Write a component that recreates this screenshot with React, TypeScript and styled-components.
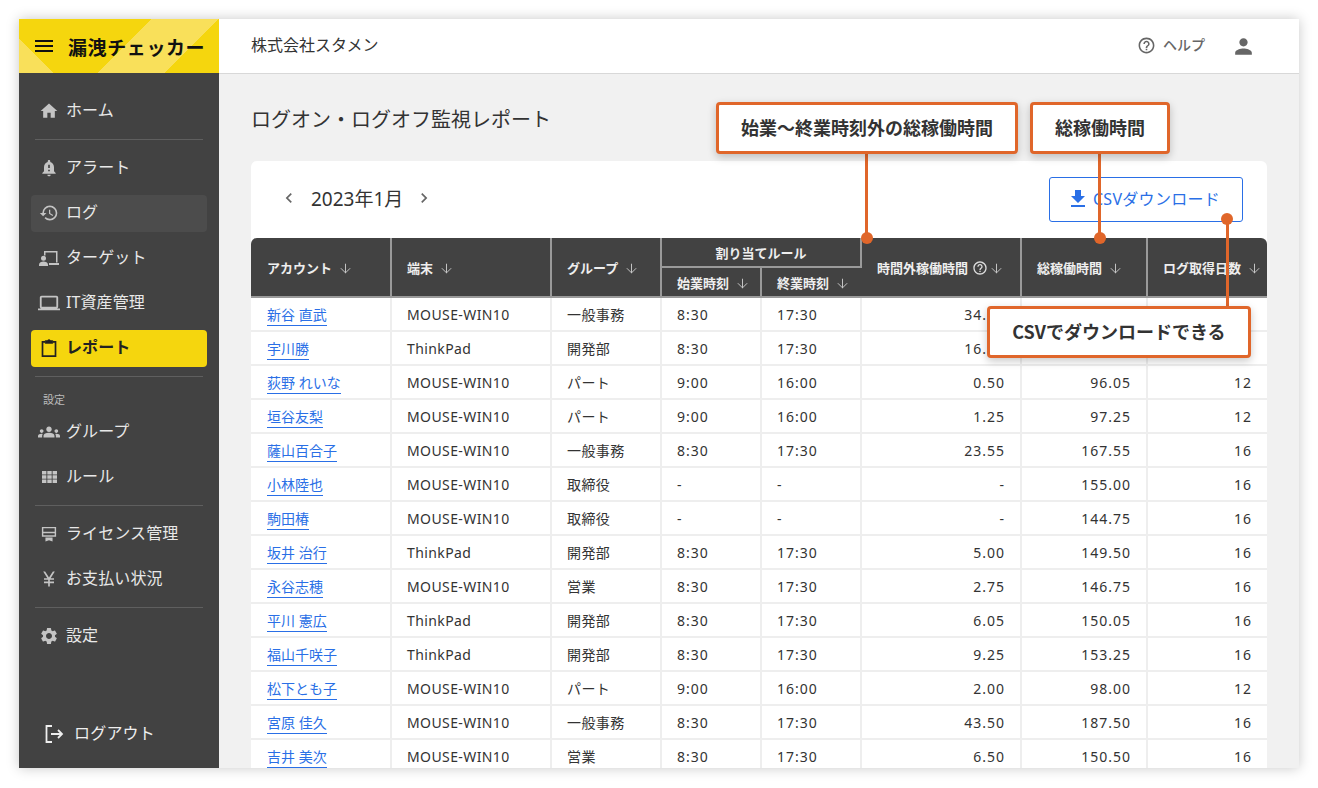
import React from 'react';
import styled, { createGlobalStyle } from 'styled-components';
import { ArrowDown } from 'lucide-react';
import {
  MdHome,
  MdNotificationImportant,
  MdHistory,
  MdOutlineLaptop,
  MdGroups,
  MdCurrencyYen,
  MdSettings,
  MdHelpOutline,
  MdPerson,
  MdChevronLeft,
  MdChevronRight,
  MdFileDownload,
  MdMenu,
} from 'react-icons/md';

const GlobalStyle = createGlobalStyle`
  html, body {
    margin: 0;
    padding: 0;
    background: #fff;
    height: 788px;
    overflow: hidden;
  }
  body {
    font-family: "Noto Sans", "Noto Sans CJK JP", sans-serif;
    color: #333;
  }
  * { box-sizing: border-box; }
`;

const Page = styled.div`
  padding: 19px 19px 20px;
  height: 788px;
`;

const Window = styled.div`
  position: relative;
  width: 1280px;
  height: 749px;
  display: flex;
  overflow: hidden;
  background: #f1f1f1;
  box-shadow: 0 0 12px rgba(0, 0, 0, 0.22);
`;

const Sidebar = styled.aside`
  width: 200px;
  flex: none;
  display: flex;
  flex-direction: column;
  background: #424242;
  color: #eee;
`;

const Logo = styled.div`
  height: 54px;
  flex: none;
  display: flex;
  align-items: center;
  padding-left: 13px;
  color: #111;
  background:
    linear-gradient(45deg, #f9e05a 24.7px, transparent 24.7px),
    linear-gradient(135deg, #f5d60e 94px, #f9e05a 94px, #f9e05a 141.4px, #f5d60e 141.4px);
`;

const LogoText = styled.span`
  margin-left: 12px;
  font-size: 19px;
  font-weight: 700;
  letter-spacing: 0.6px;
  font-family: "Noto Sans CJK JP", sans-serif;
`;

const Nav = styled.nav`
  flex: 1;
  display: flex;
  flex-direction: column;
  padding: 20px 12px 24px;
`;

const NavItem = styled.a<{ $active?: boolean; $current?: boolean }>`
  height: 37px;
  flex: none;
  display: flex;
  align-items: center;
  padding: 0 0 5px 7px;
  border-radius: 4px;
  margin-bottom: 8px;
  font-size: 16px;
  letter-spacing: 0.1px;
  color: ${(p) => (p.$active ? '#222' : '#e8e8e8')};
  font-weight: ${(p) => (p.$active ? 700 : 400)};
  background: ${(p) => (p.$active ? '#f5d60e' : p.$current ? '#4c4c4c' : 'transparent')};
`;

const NavIcon = styled.span<{ $active?: boolean }>`
  width: 22px;
  height: 20px;
  margin: 4px 6px 0 0;
  display: flex;
  align-items: center;
  justify-content: center;
  font-size: 20px;
  color: ${(p) => (p.$active ? '#222' : '#c4c4c4')};
`;

const Divider = styled.div`
  height: 1px;
  flex: none;
  margin: 1px 4px 10px;
  background: #5f5f5f;
`;

const NavLabel = styled.div`
  font-size: 11px;
  color: #bbb;
  line-height: 16px;
  margin: 5px 0 6px 12px;
`;

const Logout = styled.a`
  margin-top: auto;
  display: flex;
  align-items: center;
  padding-left: 13px;
  height: 24px;
  font-size: 16px;
  color: #eee;
  letter-spacing: 0.2px;
`;

const LogoutIcon = styled.svg`
  width: 20px;
  height: 20px;
  margin: 3px 10px 0 0;
`;

const Content = styled.div`
  flex: 1;
  min-width: 0;
  display: flex;
  flex-direction: column;
`;

const TopBar = styled.header`
  height: 55px;
  flex: none;
  display: flex;
  align-items: center;
  padding: 0 43px 4px 32px;
  background: #fff;
  border-bottom: 1px solid #d8d8d8;
  font-size: 16px;
  color: #333;
`;

const HelpLink = styled.a`
  margin-left: auto;
  display: flex;
  align-items: center;
  font-size: 14px;
  font-weight: 500;
  color: #666;
`;

const HelpIcon = styled(MdHelpOutline)`
  font-size: 19px;
  margin: 3px 7px 0 0;
`;

const UserIcon = styled(MdPerson)`
  font-size: 25px;
  margin-left: 26px;
  margin-top: 4px;
  color: #666;
`;

const Main = styled.main`
  flex: 1;
  min-height: 0;
  overflow: hidden;
  padding: 30px 32px 0;
`;

const Title = styled.h1`
  margin: 0 0 25px;
  font-size: 20px;
  line-height: 32px;
  font-weight: 400;
  color: #333;
`;

const Card = styled.section`
  background: #fff;
  border-radius: 6px 6px 0 0;
`;

const Toolbar = styled.div`
  height: 77px;
  display: flex;
  align-items: center;
  padding: 0 24px 0 28px;
`;

const MonthNav = styled.div`
  display: flex;
  align-items: center;
  font-size: 19px;
  color: #333;
  margin-top: -4px;
`;

const Chevron = styled.span`
  display: flex;
  font-size: 20px;
  color: #666;
`;

const MonthLabel = styled.span`
  margin: 0 11px 0 12px;
`;

const DownloadButton = styled.button`
  margin-left: auto;
  margin-top: -1px;
  width: 194px;
  height: 45px;
  display: flex;
  align-items: center;
  justify-content: center;
  padding: 0 6px 2px 0;
  background: #fff;
  border: 1px solid #2a6fe6;
  border-radius: 3px;
  font-family: inherit;
  font-size: 16px;
  letter-spacing: 0.3px;
  color: #2a6fe6;
`;

const DownloadIcon = styled(MdFileDownload)`
  font-size: 24px;
  margin: 2px 3px 0 0;
`;

const Table = styled.table`
  width: 1016px;
  table-layout: fixed;
  border-collapse: separate;
  border-spacing: 0;
  font-size: 14px;
`;

const Th = styled.th`
  height: 30px;
  padding: 0 0 0 15px;
  background: #424242;
  color: #eee;
  font-size: 13px;
  font-weight: 700;
  text-align: left;
  white-space: nowrap;
  border-right: 2px solid #9a9a9a;
  border-bottom: 2px solid #9a9a9a;
  &:last-child { border-right: none; }
`;

const GroupTh = styled(Th)`
  text-align: center;
  padding: 0;
`;

const FirstTh = styled(Th)`
  padding-left: 16px;
  border-top-left-radius: 6px;
`;

const LastTh = styled(Th)`
  border-top-right-radius: 6px;
  border-right: none;
`;

const SortIcon = styled(ArrowDown).attrs({ size: 15, strokeWidth: 1.5 })`
  margin-left: 6px;
  vertical-align: -3px;
  color: #ccc;
`;

const TightSortIcon = styled(SortIcon)`
  margin-left: 1px;
`;

const InfoIcon = styled(MdHelpOutline)`
  font-size: 16px;
  margin-left: 4px;
  vertical-align: -3px;
  color: #ddd;
`;

const Td = styled.td<{ $num?: boolean; $digits?: boolean }>`
  height: 34px;
  padding: ${(p) => (p.$num ? '0 15px 0 0' : '0 0 0 15px')};
  text-align: ${(p) => (p.$num ? 'right' : 'left')};
  color: #333;
  letter-spacing: ${(p) => (p.$digits ? '1px' : '0.4px')};
  white-space: nowrap;
  border-right: 2px solid #eee;
  border-bottom: 2px solid #eee;
  &:last-child { border-right: none; }
  &:first-child { padding-left: 16px; }
`;

const AccountLink = styled.a`
  color: #2a6fe6;
  padding-bottom: 1px;
  border-bottom: 1px solid #2a6fe6;
  letter-spacing: 0;
`;

const Callout = styled.div<{ $left: number; $top: number; $width: number }>`
  position: absolute;
  left: ${(p) => p.$left}px;
  top: ${(p) => p.$top}px;
  width: ${(p) => p.$width}px;
  height: 52px;
  display: flex;
  align-items: center;
  justify-content: center;
  padding-bottom: 2px;
  background: #fff;
  border: 3px solid #e0662a;
  border-radius: 4px;
  box-shadow: 0 3px 8px rgba(0, 0, 0, 0.22);
  font-family: "Noto Sans CJK JP", sans-serif;
  font-size: 18px;
  font-weight: 700;
  color: #333;
  z-index: 3;
`;

const Leader = styled.div<{ $left: number; $top: number; $height: number }>`
  position: absolute;
  left: ${(p) => p.$left}px;
  top: ${(p) => p.$top}px;
  width: 3px;
  height: ${(p) => p.$height}px;
  background: #e0662a;
  z-index: 2;
`;

const Dot = styled.div<{ $left: number; $top: number }>`
  position: absolute;
  left: ${(p) => p.$left}px;
  top: ${(p) => p.$top}px;
  width: 12px;
  height: 12px;
  border-radius: 50%;
  background: #e0662a;
  z-index: 2;
`;

const colWidths = [141, 160, 110, 100, 100, 160, 126, 119];

// values lying fully under the "CSV" callout are left out
const rows: string[][] = [
  ['新谷 直武', 'MOUSE-WIN10', '一般事務', '8:30', '17:30', '34.50', '', ''],
  ['宇川勝', 'ThinkPad', '開発部', '8:30', '17:30', '16.25', '', ''],
  ['荻野 れいな', 'MOUSE-WIN10', 'パート', '9:00', '16:00', '0.50', '96.05', '12'],
  ['垣谷友梨', 'MOUSE-WIN10', 'パート', '9:00', '16:00', '1.25', '97.25', '12'],
  ['薩山百合子', 'MOUSE-WIN10', '一般事務', '8:30', '17:30', '23.55', '167.55', '16'],
  ['小林陸也', 'MOUSE-WIN10', '取締役', '-', '-', '-', '155.00', '16'],
  ['駒田椿', 'MOUSE-WIN10', '取締役', '-', '-', '-', '144.75', '16'],
  ['坂井 治行', 'ThinkPad', '開発部', '8:30', '17:30', '5.00', '149.50', '16'],
  ['永谷志穂', 'MOUSE-WIN10', '営業', '8:30', '17:30', '2.75', '146.75', '16'],
  ['平川 憲広', 'ThinkPad', '開発部', '8:30', '17:30', '6.05', '150.05', '16'],
  ['福山千咲子', 'ThinkPad', '開発部', '8:30', '17:30', '9.25', '153.25', '16'],
  ['松下とも子', 'MOUSE-WIN10', 'パート', '9:00', '16:00', '2.00', '98.00', '12'],
  ['宮原 佳久', 'MOUSE-WIN10', '一般事務', '8:30', '17:30', '43.50', '187.50', '16'],
  ['吉井 美次', 'MOUSE-WIN10', '営業', '8:30', '17:30', '6.50', '150.50', '16'],
];

const TargetIcon = () => (
  <svg width="20" height="15" viewBox="0 0 20 15" fill="currentColor">
    <path d="M5 4.500V0h13.500v11.500H17V1.500H6.500v3z" />
    <path d="M10 12h10v2H10z" />
    <circle cx="4.500" cy="7.200" r="2.500" />
    <path d="M0 15v-1.500c0-2 2.500-3 4.500-3s4.500 1 4.500 3V15z" />
  </svg>
);

const ReportIcon = () => (
  <svg width="16" height="18" viewBox="0 0 16 18" fill="none" stroke="currentColor" strokeWidth="1.700">
    <path d="M4 2.800H1.500v14.300h13V2.800H12" />
    <path d="M4.200 1.700h2c.3-1.200 3.300-1.200 3.600 0h2v2.600H4.200z" fill="currentColor" strokeWidth="0.800" />
  </svg>
);

const RuleIcon = () => (
  <svg width="15" height="12" viewBox="0 0 15 12" fill="currentColor">
    <path d="M0 0h4.400v3.600H0zM5.300 0h4.400v3.600H5.300zM10.600 0H15v3.600h-4.400zM0 4.200h4.400v3.600H0zM5.300 4.200h4.400v3.600H5.300zM10.600 4.200H15v3.600h-4.400zM0 8.400h4.400V12H0zM5.300 8.400h4.400V12H5.300zM10.600 8.400H15V12h-4.400z" />
  </svg>
);

const LicenseIcon = () => (
  <svg width="16" height="16" viewBox="0 0 18 18" fill="currentColor">
    <path d="M1 1h16v11H1zm1.600 1.600v4h12.800v-4zm0 5.500v2.300h12.800V8.100z" fillRule="evenodd" />
    <path d="M5 13h8v4.500l-4-1.500-4 1.500z" />
  </svg>
);

const App = () => (
  <Page>
    <GlobalStyle />
    <Window>
      <Sidebar>
        <Logo>
          <MdMenu size={24} />
          <LogoText>漏洩チェッカー</LogoText>
        </Logo>
        <Nav>
          <NavItem>
            <NavIcon><MdHome /></NavIcon>ホーム
          </NavItem>
          <Divider />
          <NavItem>
            <NavIcon><MdNotificationImportant /></NavIcon>アラート
          </NavItem>
          <NavItem $current>
            <NavIcon><MdHistory /></NavIcon>ログ
          </NavItem>
          <NavItem>
            <NavIcon><TargetIcon /></NavIcon>ターゲット
          </NavItem>
          <NavItem>
            <NavIcon><MdOutlineLaptop size={22} /></NavIcon>IT資産管理
          </NavItem>
          <NavItem $active>
            <NavIcon $active><ReportIcon /></NavIcon>レポート
          </NavItem>
          <Divider />
          <NavLabel>設定</NavLabel>
          <NavItem>
            <NavIcon><MdGroups size={22} /></NavIcon>グループ
          </NavItem>
          <NavItem>
            <NavIcon><RuleIcon /></NavIcon>ルール
          </NavItem>
          <Divider />
          <NavItem>
            <NavIcon><LicenseIcon /></NavIcon>ライセンス管理
          </NavItem>
          <NavItem>
            <NavIcon><MdCurrencyYen /></NavIcon>お支払い状況
          </NavItem>
          <Divider />
          <NavItem>
            <NavIcon><MdSettings /></NavIcon>設定
          </NavItem>
          <Logout>
            <LogoutIcon viewBox="0 0 20 20" fill="none" stroke="currentColor" strokeWidth="1.800">
              <path d="M8 2H2.500v16H8M7 10h11M14 6l4 4-4 4" />
            </LogoutIcon>
            ログアウト
          </Logout>
        </Nav>
      </Sidebar>
      <Content>
        <TopBar>
          株式会社スタメン
          <HelpLink>
            <HelpIcon />
            ヘルプ
          </HelpLink>
          <UserIcon />
        </TopBar>
        <Main>
          <Title>ログオン・ログオフ監視レポート</Title>
          <Card>
            <Toolbar>
              <MonthNav>
                <Chevron><MdChevronLeft /></Chevron>
                <MonthLabel>2023年1月</MonthLabel>
                <Chevron><MdChevronRight /></Chevron>
              </MonthNav>
              <DownloadButton>
                <DownloadIcon />
                CSVダウンロード
              </DownloadButton>
            </Toolbar>
            <Table>
              <colgroup>
                {colWidths.map((w, i) => (
                  <col key={i} style={{ width: w }} />
                ))}
              </colgroup>
              <thead>
                <tr>
                  <FirstTh rowSpan={2}>アカウント<SortIcon /></FirstTh>
                  <Th rowSpan={2}>端末<SortIcon /></Th>
                  <Th rowSpan={2}>グループ<SortIcon /></Th>
                  <GroupTh colSpan={2}>割り当てルール</GroupTh>
                  <Th rowSpan={2}>時間外稼働時間<InfoIcon /><TightSortIcon /></Th>
                  <Th rowSpan={2}>総稼働時間<SortIcon /></Th>
                  <LastTh rowSpan={2}>ログ取得日数<SortIcon /></LastTh>
                </tr>
                <tr>
                  <Th>始業時刻<SortIcon /></Th>
                  <Th>終業時刻<SortIcon /></Th>
                </tr>
              </thead>
              <tbody>
                {rows.map((r) => (
                  <tr key={r[0]}>
                    <Td><AccountLink>{r[0]}</AccountLink></Td>
                    <Td>{r[1]}</Td>
                    <Td>{r[2]}</Td>
                    <Td $digits>{r[3]}</Td>
                    <Td $digits>{r[4]}</Td>
                    <Td $num $digits>{r[5]}</Td>
                    <Td $num $digits>{r[6]}</Td>
                    <Td $num $digits>{r[7]}</Td>
                  </tr>
                ))}
              </tbody>
            </Table>
          </Card>
        </Main>
      </Content>

      <Leader $left={846} $top={134} $height={84} />
      <Dot $left={842} $top={213} />
      <Callout $left={697} $top={83} $width={302}>始業〜終業時刻外の総稼働時間</Callout>

      <Leader $left={1079} $top={134} $height={84} />
      <Dot $left={1075} $top={213} />
      <Callout $left={1011} $top={83} $width={140}>総稼働時間</Callout>

      <Leader $left={1207} $top={200} $height={90} />
      <Dot $left={1202} $top={194} />
      <Callout $left={968} $top={287} $width={264}>CSVでダウンロードできる</Callout>
    </Window>
  </Page>
);

export default App;
